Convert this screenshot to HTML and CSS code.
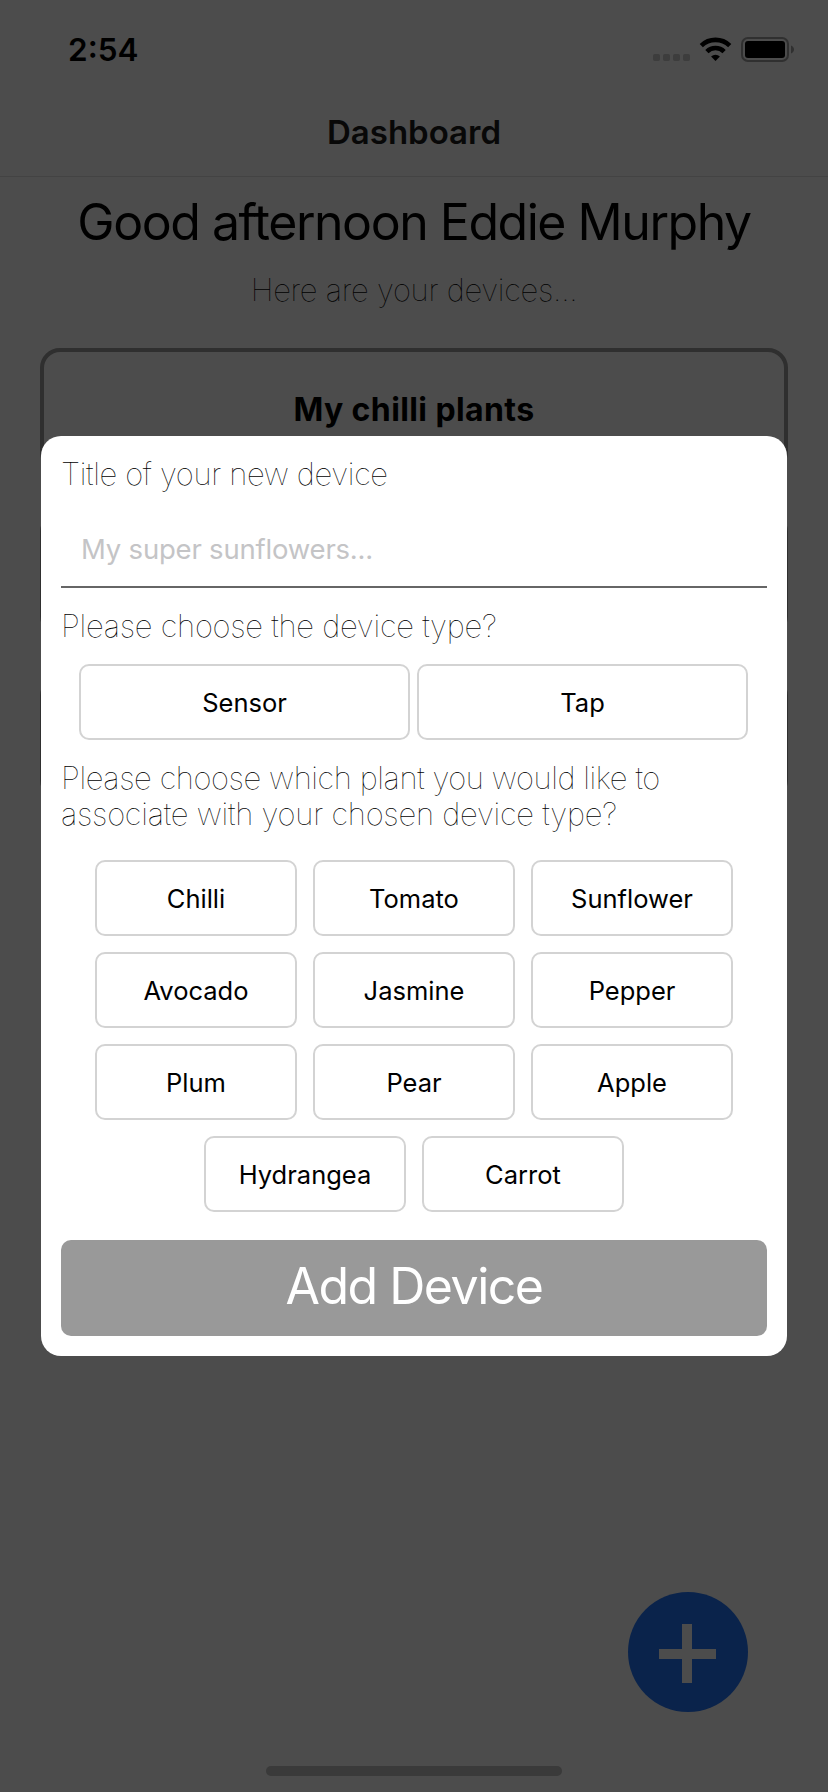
FILE: index.html
```html
<!DOCTYPE html>
<html lang="en">
<head>
<meta charset="utf-8">
<title>Dashboard</title>
<link rel="stylesheet" href="styles.css">
</head>
<body>
<div class="screen">
  <header class="topbar">
    <div class="status">
      <span class="time">2:54</span>
      <svg class="status-icons" viewBox="0 0 142 26" width="142" height="26">
        <g fill="#3d3d3d">
          <rect x="0" y="17" width="7" height="7" rx="2"/>
          <rect x="10" y="17" width="7" height="7" rx="2"/>
          <rect x="20" y="17" width="7" height="7" rx="2"/>
          <rect x="30" y="17" width="7" height="7" rx="2"/>
        </g>
        <g fill="none" stroke="#000" stroke-width="4.6">
          <path d="M48.3 8.6a20.4 20.4 0 0 1 28.4 0"/>
          <path d="M53.9 14.6a12.2 12.2 0 0 1 17.2 0"/>
        </g>
        <path d="M62.500 24l-4.400-4.400a6.200 6.200 0 0 1 8.800 0z"/>
        <rect x="89" y="1" width="46" height="23" rx="6" fill="none" stroke="#303030" stroke-width="2"/>
        <rect x="92" y="4" width="40" height="17" rx="3"/>
        <path d="M138 8.500c4 1.500 4 6.500 0 8z" fill="#303030"/>
      </svg>
    </div>
    <h1 class="nav-title">Dashboard</h1>
  </header>
  <main class="dashboard">
    <h2 class="greeting">Good afternoon Eddie Murphy</h2>
    <p class="subtitle">Here are your devices...</p>
    <section class="devices">
      <article class="device"><h3 class="device-name">My chilli plants</h3></article>
      <article class="device"></article>
      <article class="device"></article>
    </section>
  </main>
  <div class="fab">
    <svg viewBox="0 0 120 120" width="120" height="120"><path d="M54 32h10v25h24v10h-24v24h-10v-24h-23v-10h23z" fill="#4c4c4c"/></svg>
  </div>
  <div class="home-indicator"></div>
  <form class="modal">
    <p class="label">Title of your new device</p>
    <div class="input">My super sunflowers...</div>
    <p class="label label-type">Please choose the device type?</p>
    <div class="types">
      <div class="option">Sensor</div>
      <div class="option">Tap</div>
    </div>
    <p class="label label-plant">Please choose which plant you would like to<br><span class="label-line">associate with your chosen device type?</span></p>
    <div class="plants">
      <div class="option">Chilli</div>
      <div class="option">Tomato</div>
      <div class="option">Sunflower</div>
      <div class="option">Avocado</div>
      <div class="option">Jasmine</div>
      <div class="option">Pepper</div>
      <div class="option">Plum</div>
      <div class="option">Pear</div>
      <div class="option">Apple</div>
      <div class="option">Hydrangea</div>
      <div class="option">Carrot</div>
    </div>
    <div class="submit">Add Device</div>
  </form>
</div>
</body>
</html>
```
FILE: styles.css
```css
* { box-sizing: border-box; margin: 0; padding: 0; }
body { background: #4c4c4c; color: #000; font-family: Inter, "Liberation Sans", sans-serif; }
.screen { position: relative; width: 828px; height: 1792px; overflow: hidden; }
.topbar { height: 177px; border-bottom: 1px solid #434343; }
.status { display: flex; justify-content: space-between; height: 88px; padding: 37px 33px 0 68px; }
.time { font-size: 31.5px; font-weight: 600; line-height: 26px; }
.status-icons { display: block; }
.nav-title { font-size: 33px; font-weight: 600; line-height: 88px; text-align: center; color: #080808; }
.dashboard { padding: 0 40px; }
.greeting { padding-top: 15px; font-size: 50px; font-weight: 400; line-height: 60px; letter-spacing: -1.47px; text-align: center; white-space: nowrap; }
.subtitle { padding-top: 20px; font-size: 31px; font-weight: 100; line-height: 36px; letter-spacing: -0.28px; text-align: center; }
.devices { display: grid; gap: 40px; padding-top: 40px; }
.device { height: 124px; border: 4px solid #2f2f2f; border-radius: 20px; padding-top: 40px; }
.device-name { font-size: 32px; font-weight: 700; line-height: 36px; letter-spacing: 0.4px; text-align: center; }
.fab { position: absolute; left: 628px; top: 1592px; width: 120px; height: 120px; border-radius: 50%; background: #0a234b; }
.fab svg { display: block; }
.home-indicator { position: absolute; left: 266px; top: 1766px; width: 296px; height: 10px; border-radius: 5px; background: #3a3a3a; }
.modal { position: absolute; left: 41px; top: 436px; width: 746px; height: 920px; padding: 20px; border-radius: 20px; background: #fff; }
.label { font-size: 31px; font-weight: 100; line-height: 36px; letter-spacing: -0.36px; white-space: nowrap; }
.input { height: 78px; margin-top: 18px; padding-left: 20px; border-bottom: 2px solid #666; color: #c4c4c6; font-size: 27.5px; line-height: 78px; letter-spacing: -0.2px; }
.label-type { margin-top: 20px; letter-spacing: -0.26px; }
.types { display: grid; grid-template-columns: 1fr 1fr; gap: 7px; margin: 20px 19px 0 18px; }
.option { display: grid; place-items: center; height: 76px; border: 2px solid #d3d3d3; border-radius: 10px; font-size: 25.5px; }
.label-plant { margin-top: 20px; letter-spacing: -0.42px; }
.label-line { letter-spacing: -0.24px; }
.plants { display: flex; flex-wrap: wrap; justify-content: center; gap: 16px; margin-top: 28px; padding: 0 34px; }
.plants .option { width: 202px; }
.submit { display: grid; place-items: center; height: 96px; margin-top: 28px; padding-bottom: 4px; border-radius: 10px; background: #999; color: #fff; font-size: 50px; letter-spacing: -1.5px; }
```
